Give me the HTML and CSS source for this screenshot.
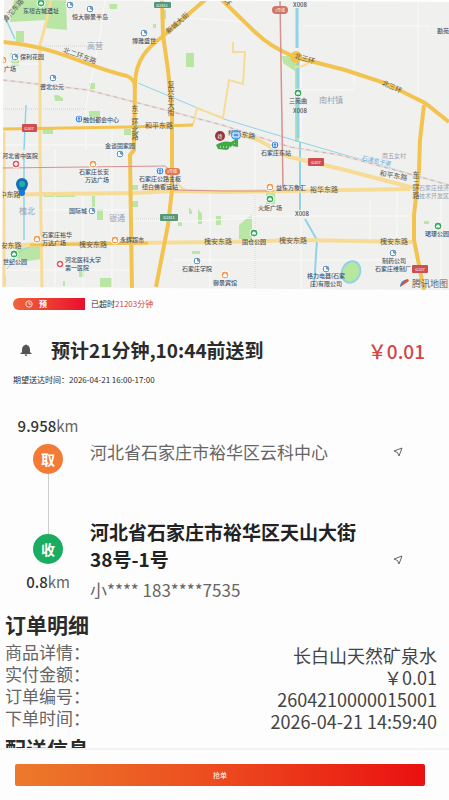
FILE: index.html
```
<!DOCTYPE html>
<html lang="zh-CN">
<head>
  <meta charset="UTF-8" />
  <meta name="viewport" content="width=device-width, initial-scale=1" />
  <title>订单详情</title>
  <link rel="stylesheet" href="styles.css">
</head>
<body>

<div class="page">
  <main class="content">

    <!-- 地图 -->
    <svg class="map" viewBox="0 0 449 290" role="img" aria-label="配送地图">
      <defs>
        <clipPath id="mapArea"><path d="M4 0L449 2V290L2 287Z"/></clipPath>
        <g id="house"><circle r="4" fill="#6b9bc3" stroke="#fff"/><path d="M-2 2V-2H0V0L2 1V2Z" fill="#fff"/></g>
        <g id="park"><circle r="4" fill="#35a95c" stroke="#fff"/><path d="M-2 1.500V-.5H-1L0-2L1-.5H2V1.500Z" fill="#fff"/></g>
        <g id="shop"><circle r="4" fill="#f19a55" stroke="#fff"/><path d="M-2-.5H2V2H-2ZM-1-.5V-1.500H1V-.5" fill="#fff"/></g>
        <g id="hospital"><circle r="4" fill="#e25b60" stroke="#fff"/><path d="M-2 0H2M0-2V2" stroke="#fff" stroke-width="1.400"/></g>
        <g id="station"><circle r="4" fill="#4389e8" stroke="#fff"/><path d="M-1.500-2H1.500V1H-1.500ZM-2 2.200L-1 1M2 2.200L1 1" stroke="#fff" stroke-width=".7" fill="none"/></g>
      </defs>
      <g clip-path="url(#mapArea)">
        <rect width="449" height="290" fill="#f0f0ee"/>

        <!-- 绿地 -->
        <g fill="#b9e6a4">
          <path d="M14 0H66L67 30L46 28V20L10 22Z"/>
          <path d="M16 31H24V42H16ZM186 53H194V67H186ZM89 83H95V89H89ZM54 95H58L63 98V101H55ZM89 111H100V117H89ZM124 129H131V135H124ZM42 129H53V134H43ZM10 53H19V66H12ZM109 4H117V9H110ZM163 10H166V19H163ZM153 24H156V28H153Z"/>
          <path d="M282 56H291L298 65V73L283 63ZM92 196H95V209H103V220H97V210H92ZM44 195H75V197H44ZM100 278H112V287H100ZM16 248L41 246V259L28 261L16 258ZM4 277H6V285H4ZM79 270H84V277H79ZM192 251H200V254H192ZM132 185H138V190H132ZM132 201H138V207H132ZM239 225L252 214V239H239ZM266 193H275V204H266ZM216 216H221V225H216ZM198 209L202 214V224H198ZM189 207L192 211V214H189ZM63 281H65V286H63ZM424 221H429V224H424ZM178 222H182V226H178Z"/>
          <path d="M297 63V142" stroke="#b1e5a9" stroke-width="4"/>
        </g>

        <!-- 小路 -->
        <g class="lane">
          <path d="M105 0L101 30L93 70L86 105V150M3 64H40M3 145H134M190 18L247 22M354 0V84M418 0V95M303 26H430M300 90H354M255 143V290M301 60V290M224 216H410M55 150V286M83 193V290M112 130V290M134 220H168M5 270H130M210 190V287M172 222L255 218M370 200V240M441 190V290M174 260H420M397 190V240M40 210H130"/>
          <path class="border" d="M42 46H93M3 109H86M134 219H170M255 195V290"/>
        </g>

        <!-- 水系 -->
        <g fill="none" stroke="#8fd3e9">
          <path d="M4 15L15 39M26 105L24 150M24 155V240" stroke-width="1.500"/>
          <path d="M297 8V48M298 60V138" stroke-width="3"/>
          <path d="M300 142V210M305 219L317 240L314 287" stroke-width="2"/>
          <path d="M138 83L224 119L300 142L449 185"/>
          <ellipse cx="351" cy="272" rx="9" ry="11" fill="#b6e79d" stroke-width="2" transform="rotate(25 351 272)"/>
          <path d="M7 269C14 262 15 251 30 247"/>
        </g>

        <!-- 铁路 -->
        <g fill="none">
          <path d="M3 80L88 90L150 106L222 125L290 147L340 155L449 185" stroke="#eadfdc" stroke-width="2"/>
          <path d="M3 80L88 90L150 106L222 125L290 147L340 155L449 185" stroke="#ccb3ae" stroke-dasharray="4 4"/>
        </g>

        <!-- 次要道路 -->
        <g fill="none" stroke="#f6dc97" stroke-width="3">
          <path d="M51 0L46 23L40 45V150L42 290M4 132V287"/>
          <path d="M193 125L197 108L223 118L229 80L243 84L245 52H233V42" stroke-width="2"/>
          <path d="M5 195L45 194L135 193L172 191L224 192L410 189" stroke-width="4"/>
          <path d="M5 246L40 244L130 243L224 242L300 240L412 242" stroke-width="4"/>
          <path d="M236 134C265 138 270 150 290 157L345 170L414 188" stroke-width="4"/>
          <path d="M140 193Q165 190 170 177M176 178Q178 191 196 192M295 67Q307 67 311 60" stroke-width="2"/>
        </g>

        <!-- 主干道 -->
        <g class="main-road">
          <path d="M3 42C60 47 83 66 127 76Q135 79 135 88"/>
          <path d="M205 0L163 36C146 49 136 60 135 83L134 150L130 155L132 290"/>
          <path d="M162 0L163 35L168 70L172 110V190L168 225L156 287"/>
          <path d="M3 129L130 127L193 125" stroke-width="3"/>
          <path d="M30 245L148 243" stroke-width="3"/>
          <path d="M220-2L255 32Q270 47 295 57L345 70L385 83L425 103L449 122"/>
          <path d="M424 105L420 140L419 170L414 215V240L424 290"/>
          <circle cx="296" cy="57" r="4"/>
        </g>
        <g fill="none" stroke="#d9908e">
          <path d="M280 0L281 62L283 188" stroke-width="1.500"/>
          <path d="M2 168L165 166L172 172L174 190L224 191H274"/>
        </g>

        <!-- 道路编号 -->
        <g class="sign">
          <rect x="154" y="2" width="17" height="6" rx="1" fill="#559877"/><text x="162" y="7">G1811</text>
          <rect x="22" y="124" width="15" height="8" rx="1" fill="#cf4e52"/><text x="29" y="130">G307</text>
          <rect x="272" y="6" width="16" height="8" rx="4" fill="#cd7668"/><text x="280" y="12">1号线</text>
          <rect x="308" y="158" width="16" height="8" rx="1" fill="#cf4e52"/><text x="316" y="164">G307</text>
          <rect x="412" y="265" width="16" height="8" rx="1" fill="#cf4e52"/><text x="420" y="271">G107</text>
          <rect x="160" y="214" width="18" height="7" rx="1" fill="#559877"/><text x="169" y="219">G1811</text>
          <rect x="165" y="168" width="15" height="7" rx="3" fill="#e27a55"/><text x="172" y="173">1号线</text>
        </g>

        <!-- 地点 -->
        <use href="#park" x="41" y="3"/><use href="#house" x="70" y="5"/><use href="#house" x="90" y="9"/>
        <use href="#house" x="144" y="33"/><use href="#house" x="15" y="57"/><use href="#house" x="53" y="78"/>
        <use href="#station" x="79" y="119"/><use href="#shop" x="3" y="60"/><use href="#park" x="298" y="93"/>
        <use href="#hospital" x="16" y="164"/><use href="#shop" x="93" y="164"/><use href="#house" x="120" y="154"/>
        <use href="#station" x="160" y="171"/><use href="#house" x="92" y="211"/><use href="#shop" x="37" y="239"/>
        <use href="#shop" x="115" y="240"/><use href="#park" x="14" y="254"/><use href="#hospital" x="60" y="264"/>
        <use href="#house" x="197" y="261"/><use href="#shop" x="225" y="275"/><use href="#shop" x="270" y="187"/>
        <use href="#park" x="270" y="199"/><use href="#park" x="254" y="233"/><use href="#park" x="438" y="226"/>
        <use href="#house" x="393" y="253"/><use href="#house" x="326" y="269"/><use href="#station" x="275" y="145"/>

        <g class="place">
          <text x="41" y="13">东垣古城遗址</text>
          <text x="90" y="19">恒大御景半岛</text>
          <text x="144" y="43">博雅盛世</text>
          <text x="32" y="59">保利花园</text>
          <text x="10" y="71">广场</text>
          <text x="52" y="89">壹北公元</text>
          <text x="101" y="122">融创都会中心</text>
          <text x="120" y="148">金谈固家园</text>
          <text x="20" y="158">河北省中医院</text>
          <text x="94" y="174">石家庄长安</text><text x="97" y="182">万达广场</text>
          <text x="160" y="181">石家庄公路主枢</text><text x="160" y="189">纽白佛客运站</text>
          <text x="78" y="213">国际城</text>
          <text x="57" y="237">石家庄裕华</text><text x="54" y="245">万达广场</text>
          <text x="132" y="242">永辉超市</text>
          <text x="15" y="264">世纪公园</text>
          <text x="83" y="262">河北医科大学</text><text x="77" y="270">第一医院</text>
          <text x="197" y="271">石家庄学院</text>
          <text x="225" y="285">御景宾馆</text>
          <text x="276" y="155">石家庄东站</text>
          <text x="291" y="190">益东万象汇</text>
          <text x="270" y="210">火炬广场</text>
          <text x="254" y="244">固仓公园</text>
          <text x="437" y="236">珺璟公园</text>
          <text x="394" y="263">制药公司</text><text x="393" y="271">石家庄维制厂</text>
          <text x="326" y="278">格力电器(石家</text><text x="326" y="286">庄)有限公司</text>
          <text x="298" y="103">三苑曲</text>
          <text x="443" y="33">勘苑</text>
          <text x="300" y="7">X008</text><text x="300" y="113">X008</text><text x="302" y="216">X008</text>
        </g>

        <g class="road-name">
          <text transform="translate(15 12) rotate(-50)">滹沱东路</text>
          <text transform="translate(79 58) rotate(20)">北二环东路</text>
          <text transform="translate(179 25) rotate(-42)">新城大街</text>
          <text x="159" y="128">和平东路</text>
          <text x="10" y="197">中东路</text>
          <text x="11" y="248">安东路</text>
          <text x="93" y="247">槐安东路</text>
          <text x="218" y="244">槐安东路</text>
          <text x="293" y="243">槐安东路</text>
          <text x="394" y="244">槐安东路</text>
          <text x="324" y="192">裕华东路</text>
          <text transform="translate(393 178) rotate(10)">和平东路</text>
          <text transform="translate(241 137) rotate(8)">和平东路</text>
          <text transform="translate(304 61) rotate(16)">北三环</text>
          <text transform="translate(391 89) rotate(24)">北三环</text>
          <text transform="translate(226 4) rotate(45)">环</text>
          <text class="upright" x="135" y="105">东二环北路</text>
          <text class="upright" x="171" y="81">复兴东大街</text>
          <text class="upright" x="416" y="171">东三环路</text>
        </g>

        <g class="district">
          <text x="95" y="49">高营</text>
          <text x="27" y="214">槐北</text>
          <text x="117" y="221">银通</text>
          <text x="331" y="103">南村镇</text>
          <text class="small" x="394" y="158">南五女村</text>
          <text class="small" x="434" y="190">石家庄经济</text>
          <text class="small" x="434" y="198">技术开发区</text>
          <text class="small water" transform="translate(376 163) rotate(13)">石津总干渠</text>
        </g>

        <!-- 取货点、骑手 -->
        <path d="M216 145Q223 140 231 142L238 138V147L232 146L227 150L218 149Z" fill="#43a846"/>
        <path d="M220 147H231L235 143" stroke="#fff" stroke-dasharray="1 2" fill="none"/>
        <circle cx="236" cy="135" r="5" fill="#4a9ade"/><path d="M233 133H239V137H233Z" fill="none" stroke="#fff"/>
        <circle cx="220" cy="136" r="5" fill="#98333d"/><text class="pin" x="220" y="138">终</text>
        <path d="M22 194Q16 188 16 184A6 6 0 0 1 28 184Q28 188 22 194Z" fill="#156fb7"/>
        <circle cx="22" cy="184" r="3" fill="#19b5a1"/><circle cx="22" cy="193" r="3" fill="#1478e6"/>

        <path d="M400 287Q400 280 408 279L405 283Z" fill="#2b8fe0"/><path d="M400 287L409 281L408 279L404 281Z" fill="#e4502f"/>
        <text class="map-logo" x="412" y="287">腾讯地图</text>
      </g>
    </svg>

    <!-- 时效 -->
    <section class="summary">
      <div class="status">
        <span class="badge">
          <svg viewBox="0 0 10 10" aria-hidden="true"><circle cx="5" cy="5" r="4"/><path d="M5 2.500V5.200H7.300"/></svg>
          预
        </span>
        <span class="overtime">已超时<em>21203分钟</em></span>
      </div>
      <div class="headline">
        <svg class="bell" viewBox="0 0 12 12" aria-hidden="true"><path d="M5 1Q6 0 7 1Q10 2 10 6V8L12 10H0L2 8V6Q2 2 5 1ZM4.500 10.500H7.500Q7 12 6 12Q5 12 4.500 10.500Z"/></svg>
        <h1>预计21分钟,10:44前送到</h1>
        <strong class="price">￥0.01</strong>
      </div>
      <p class="expect">期望送达时间：2026-04-21 16:00-17:00</p>
    </section>

    <!-- 路线 -->
    <section class="route">
      <div class="track">
        <span class="distance"><b>9.958</b>km</span>
        <span class="stop pickup">取</span>
        <span class="line"></span>
        <span class="stop deliver">收</span>
        <span class="distance"><b>0.8</b>km</span>
      </div>
      <div class="addresses">
        <div class="address from">
          <p>河北省石家庄市裕华区云科中心</p>
          <button class="nav" type="button" aria-label="导航到取货点">
            <svg viewBox="0 0 10 10"><path d="M1 4L9 1L6 9L4.500 5.500Z"/></svg>
          </button>
        </div>
        <div class="address to">
          <div>
            <h2>河北省石家庄市裕华区天山大街38号-1号</h2>
            <p>小**** 183****7535</p>
          </div>
          <button class="nav" type="button" aria-label="导航到收货点">
            <svg viewBox="0 0 10 10"><path d="M1 4L9 1L6 9L4.500 5.500Z"/></svg>
          </button>
        </div>
      </div>
    </section>

    <!-- 订单 -->
    <section class="detail">
      <h2>订单明细</h2>
      <dl>
        <div><dt>商品详情：</dt><dd>长白山天然矿泉水</dd></div>
        <div><dt>实付金额：</dt><dd>￥0.01</dd></div>
        <div><dt>订单编号：</dt><dd>2604210000015001</dd></div>
        <div><dt>下单时间：</dt><dd>2026-04-21 14:59:40</dd></div>
      </dl>
      <h2>配送信息</h2>
    </section>

  </main>

  <footer class="action">
    <button type="button">抢单</button>
  </footer>
</div>

</body>
</html>
```
FILE: styles.css
```
* {
  box-sizing: border-box;
}
body {
  margin: 0;
  background: #fdfdfd;
  color: #2b2b2b;
  font-family: "Noto Sans CJK SC", sans-serif;
}
h1, h2, p, dl, dd {
  margin: 0;
}
.page {
  display: flex;
  flex-direction: column;
  height: 100vh;
}
.content {
  flex: 1;
  min-height: 0;
  overflow-y: auto;
  scrollbar-width: none;
}

/* 地图 */
.map {
  display: block;
  width: 100%;
}
.map text {
  text-anchor: middle;
}
.lane path {
  fill: none;
  stroke: #fafafa;
  stroke-width: 1;
}
.lane .border {
  stroke: #d2d2d2;
  stroke-dasharray: 1 1;
}
.main-road {
  fill: none;
  stroke: #f3c34f;
  stroke-width: 4;
}
.sign {
  fill: #fff;
  font-size: 4px;
}
.place {
  fill: #4a5568;
  font-size: 6px;
  font-weight: 500;
}
.road-name {
  fill: #5c564a;
  font-size: 7px;
}
.road-name .upright {
  writing-mode: vertical-rl;
  text-anchor: start;
}
.district {
  fill: #9aa3b3;
  font-size: 8px;
}
.district .small {
  font-size: 6px;
}
.district .water {
  fill: #62aede;
}
.map .pin {
  fill: #fff;
  font-size: 5px;
}
.map .map-logo {
  fill: #666;
  font-size: 9px;
  text-anchor: start;
}

/* 时效 */
.summary {
  padding: 8px 24px 0 13px;
}
.status {
  display: flex;
  align-items: center;
  gap: 6px;
  font-size: 8px;
  line-height: 12px;
}
.badge {
  display: flex;
  align-items: center;
  gap: 6px;
  width: 72px;
  padding-left: 12px;
  border-radius: 6px 0 0 6px;
  background: linear-gradient(90deg, #f0643a, #e8102c);
  color: #fff;
  font-weight: 700;
}
.badge svg {
  width: 8px;
  height: 8px;
  fill: none;
  stroke: #fff;
}
.overtime em {
  color: #d14545;
  font-style: normal;
}
.headline {
  display: flex;
  align-items: center;
  margin-top: 24px;
  padding-left: 7px;
}
.bell {
  width: 12px;
  height: 12px;
  margin-right: 19px;
  fill: #555;
}
.headline h1 {
  font-size: 19px;
  line-height: 32px;
  font-weight: 700;
}
.price {
  margin-left: auto;
  color: #d04747;
  font-size: 19px;
  font-weight: 500;
}
.expect {
  margin-top: 8px;
  font-size: 8px;
  line-height: 12px;
}

/* 路线 */
.route {
  display: flex;
  padding: 28px 24px 0 0;
  color: #666;
}
.track {
  display: flex;
  flex-direction: column;
  align-items: center;
  width: 96px;
  margin-right: -6px;
}
.distance {
  font-size: 15px;
  line-height: 24px;
}
.distance b {
  color: #333;
  font-weight: 500;
}
.stop {
  width: 30px;
  height: 30px;
  border-radius: 50%;
  color: #fff;
  font-size: 14px;
  line-height: 30px;
  font-weight: 700;
  text-align: center;
}
.pickup {
  margin-top: 6px;
  background: #f47b35;
}
.line {
  width: 1px;
  height: 60px;
  background: #ccc;
}
.deliver {
  margin-bottom: 6px;
  background: #1aad61;
}
.addresses {
  flex: 1;
}
.address {
  display: flex;
  align-items: center;
  justify-content: space-between;
  font-size: 17px;
  line-height: 24px;
}
.from {
  padding-top: 26px;
}
.to {
  margin-top: 54px;
}
.to h2 {
  max-width: 270px;
  margin-bottom: 6px;
  color: #222;
  font-size: 19px;
  line-height: 27px;
  font-weight: 700;
}
.nav {
  width: 20px;
  height: 20px;
  margin-right: 17px;
  padding: 5px;
  border: none;
  background: none;
}
.nav svg {
  display: block;
  width: 10px;
  height: 10px;
  fill: none;
  stroke: #666;
}

/* 订单 */
.detail {
  padding: 6px 12px 0 5px;
}
.detail h2 {
  font-size: 21px;
  line-height: 32px;
  font-weight: 700;
}
.detail dl {
  padding-top: 4px;
}
.detail dl div {
  display: flex;
  justify-content: space-between;
  height: 22px;
}
.detail dt {
  color: #666;
  font-size: 17px;
  line-height: 16px;
}
.detail dd {
  color: #444;
  font-size: 18px;
  line-height: 22px;
}

/* 底部按钮 */
.action {
  padding: 14px 24px 14px 15px;
  border-top: 2px solid #f2f2f2;
}
.action button {
  display: block;
  width: 100%;
  height: 22px;
  border: none;
  border-radius: 2px;
  background: linear-gradient(90deg, #ec7a2c, #ec4a1e 50%, #ea1010);
  color: #fff;
  font-family: inherit;
  font-size: 7px;
}
```
